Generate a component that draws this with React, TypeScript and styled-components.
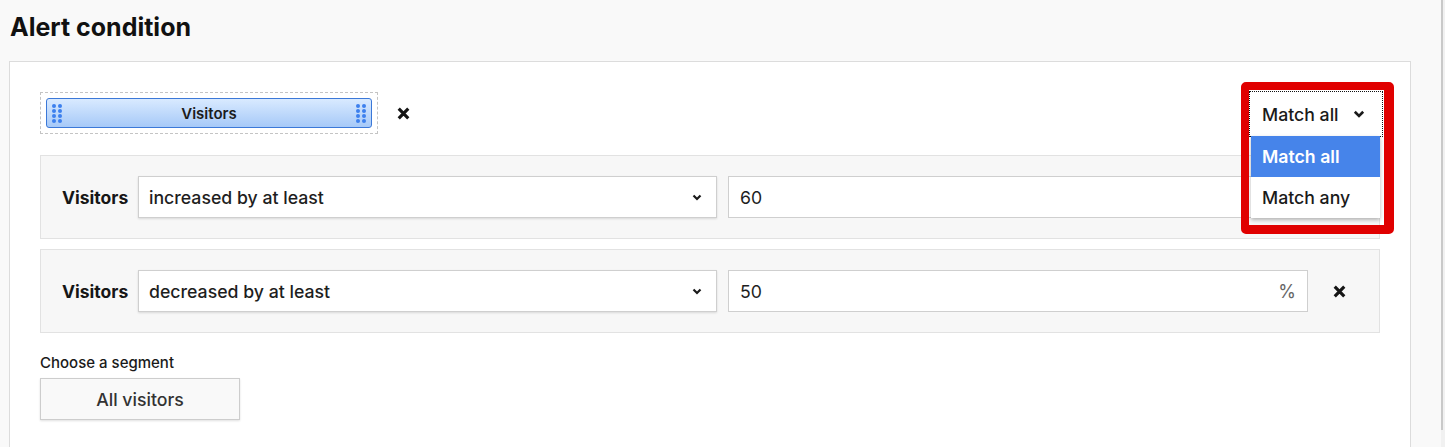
import React from "react";
import styled, { createGlobalStyle } from "styled-components";

const GlobalStyle = createGlobalStyle`
  html, body {
    margin: 0;
    padding: 0;
    background: #f9f9f9;
    font-family: Inter, "Noto Sans", "Liberation Sans", sans-serif;
    color: #1a1a1a;
  }
`;

const CloseIcon = ({ size = 12 }: { size?: number }) => (
  <svg width={size} height={size} viewBox="0 0 12 12">
    <path d="M1.6 1.6 L10.4 10.4 M10.4 1.6 L1.6 10.4" stroke="#151515" strokeWidth="2.9" fill="none" />
  </svg>
);

const Chevron = ({ size = 10 }: { size?: number }) => (
  <svg width={size} height={size * 0.7} viewBox="0 0 10 7">
    <path d="M1.5 1.5 L5 5 L8.5 1.5" stroke="#1a1a1a" strokeWidth="2.2" fill="none" />
  </svg>
);

const Grip = () => (
  <Dots>
    {Array.from({ length: 8 }).map((_, i) => (
      <Dot key={i} />
    ))}
  </Dots>
);

const conditions = [
  { op: "increased by at least", value: "60" },
  { op: "decreased by at least", value: "50" },
];

export default function App() {
  return (
    <>
      <GlobalStyle />
      <Page>
        <Main>
          <Title>Alert condition</Title>
          <Panel>
            <TopRow>
              <ChipSlot>
                <Chip>
                  <Grip />
                  <ChipLabel>Visitors</ChipLabel>
                  <Grip />
                </Chip>
              </ChipSlot>
              <IconButton $width={50}>
                <CloseIcon size={13} />
              </IconButton>
              <MatchWrap>
                <MatchSelect>
                  <span>Match all</span>
                  <Chevron size={12} />
                </MatchSelect>
                <Menu>
                  <Option $active>Match all</Option>
                  <Option>Match any</Option>
                </Menu>
                <Highlight />
              </MatchWrap>
            </TopRow>

            <Conditions>
              {conditions.map((c) => (
                <ConditionRow key={c.op}>
                  <MetricLabel>Visitors</MetricLabel>
                  <Select>
                    <span>{c.op}</span>
                    <Chevron />
                  </Select>
                  <Input>
                    <span>{c.value}</span>
                    <Unit>%</Unit>
                  </Input>
                  <IconButton $width={62}>
                    <CloseIcon size={13} />
                  </IconButton>
                </ConditionRow>
              ))}
            </Conditions>

            <SegmentLabel>Choose a segment</SegmentLabel>
            <SegmentButton>All visitors</SegmentButton>
          </Panel>
        </Main>
        <ScrollTrack>
          <ScrollThumb />
        </ScrollTrack>
      </Page>
    </>
  );
}

const Page = styled.div`
  display: flex;
  height: 447px;
  overflow: hidden;
`;

const Main = styled.main`
  flex: 1;
  padding: 0 30px 0 9px;
  min-width: 0;
`;

const Title = styled.h2`
  margin: 0 0 19px;
  padding: 12px 0 0 1px;
  font-size: 25px;
  line-height: 30px;
  font-weight: 700;
  color: #111;
`;

const Panel = styled.section`
  background: #fff;
  border: 1px solid #dcdcdc;
  padding: 30px 30px 30px;
`;

const TopRow = styled.div`
  display: flex;
  align-items: flex-start;
  height: 44px;
`;

const ChipSlot = styled.div`
  border: 1px dashed #c4c4c4;
  padding: 5px;
  width: 326px;
`;

const Chip = styled.div`
  display: flex;
  align-items: center;
  justify-content: space-between;
  height: 28px;
  padding: 0 5px;
  border: 1px solid #3b78d8;
  border-radius: 3px;
  background: linear-gradient(#d9eaff, #a6c9f8);
`;

const ChipLabel = styled.span`
  font-size: 15px;
  font-weight: 600;
  color: #1c1c1c;
`;

const Dots = styled.div`
  display: grid;
  grid-template-columns: 4px 4px;
  gap: 1px 2px;
`;

const Dot = styled.span`
  width: 4px;
  height: 4px;
  border-radius: 50%;
  background: #3d80ee;
`;

const IconButton = styled.div<{ $width: number }>`
  display: flex;
  align-items: center;
  justify-content: center;
  width: ${(p) => p.$width}px;
  height: 42px;
  flex: none;
`;

const MatchWrap = styled.div`
  position: relative;
  margin-left: auto;
  margin-right: -2px;
`;

const MatchSelect = styled.div`
  display: flex;
  align-items: center;
  justify-content: space-between;
  box-sizing: border-box;
  width: 132px;
  height: 44px;
  padding: 0 17px 0 12px;
  background: #fff;
  outline: 1px dotted #111;
  font-size: 17.7px;
  font-weight: 500;
`;

const Menu = styled.div`
  position: absolute;
  top: 44px;
  left: 1px;
  width: 129px;
  background: #fff;
  box-shadow: 0 2px 4px rgba(0, 0, 0, 0.28);
  z-index: 2;
`;

const Option = styled.div<{ $active?: boolean }>`
  height: 41px;
  display: flex;
  align-items: center;
  padding-left: 11px;
  font-size: 17.7px;
  font-weight: ${(p) => (p.$active ? 600 : 500)};
  color: ${(p) => (p.$active ? "#fff" : "#1a1a1a")};
  background: ${(p) => (p.$active ? "#4684ea" : "#fff")};
`;

const Highlight = styled.div`
  position: absolute;
  left: -9px;
  top: -10px;
  width: 153px;
  height: 152px;
  box-sizing: border-box;
  border: 8px solid #e00000;
  border-right-width: 10px;
  border-bottom-width: 9px;
  border-radius: 5px;
  pointer-events: none;
  z-index: 3;
`;

const Conditions = styled.div`
  display: flex;
  flex-direction: column;
  gap: 10px;
  margin-top: 19px;
`;

const ConditionRow = styled.div`
  display: flex;
  align-items: center;
  padding: 20px 10px 20px 21px;
  background: #f7f7f7;
  border: 1px solid #e2e2e2;
`;

const MetricLabel = styled.span`
  font-size: 17.5px;
  font-weight: 700;
  width: 76px;
  flex: none;
  color: #161616;
`;

const Field = styled.div`
  display: flex;
  align-items: center;
  justify-content: space-between;
  height: 42px;
  box-sizing: border-box;
  background: #fff;
  border: 1px solid #cfcfcf;
  box-shadow: 0 1px 2px rgba(0, 0, 0, 0.12);
  font-size: 17.7px;
  font-weight: 500;
  color: #1e1e1e;
`;

const Select = styled(Field)`
  flex: 0 0 579px;
  padding: 0 14px 0 10px;
  margin-right: 11px;
`;

const Input = styled(Field)`
  flex: 0 0 580px;
  padding: 0 11px 0 11px;
  box-shadow: none;
  font-weight: 400;
`;

const Unit = styled.span`
  color: #666;
  font-size: 18px;
`;

const SegmentLabel = styled.div`
  margin-top: 21px;
  font-size: 15px;
  line-height: 18px;
  font-weight: 500;
  color: #1a1a1a;
`;

const SegmentButton = styled.div`
  margin-top: 6px;
  width: 200px;
  height: 42px;
  box-sizing: border-box;
  display: flex;
  align-items: center;
  justify-content: center;
  background: #f9f9f9;
  border: 1px solid #cdcdcd;
  box-shadow: 0 1px 2px rgba(0, 0, 0, 0.12);
  font-size: 17.7px;
  font-weight: 500;
  color: #333;
`;

const ScrollTrack = styled.div`
  width: 4px;
  flex: none;
  background: #f1f1f1;
`;

const ScrollThumb = styled.div`
  height: 430px;
  border-left: 2px solid #c9c9c9;
`;
